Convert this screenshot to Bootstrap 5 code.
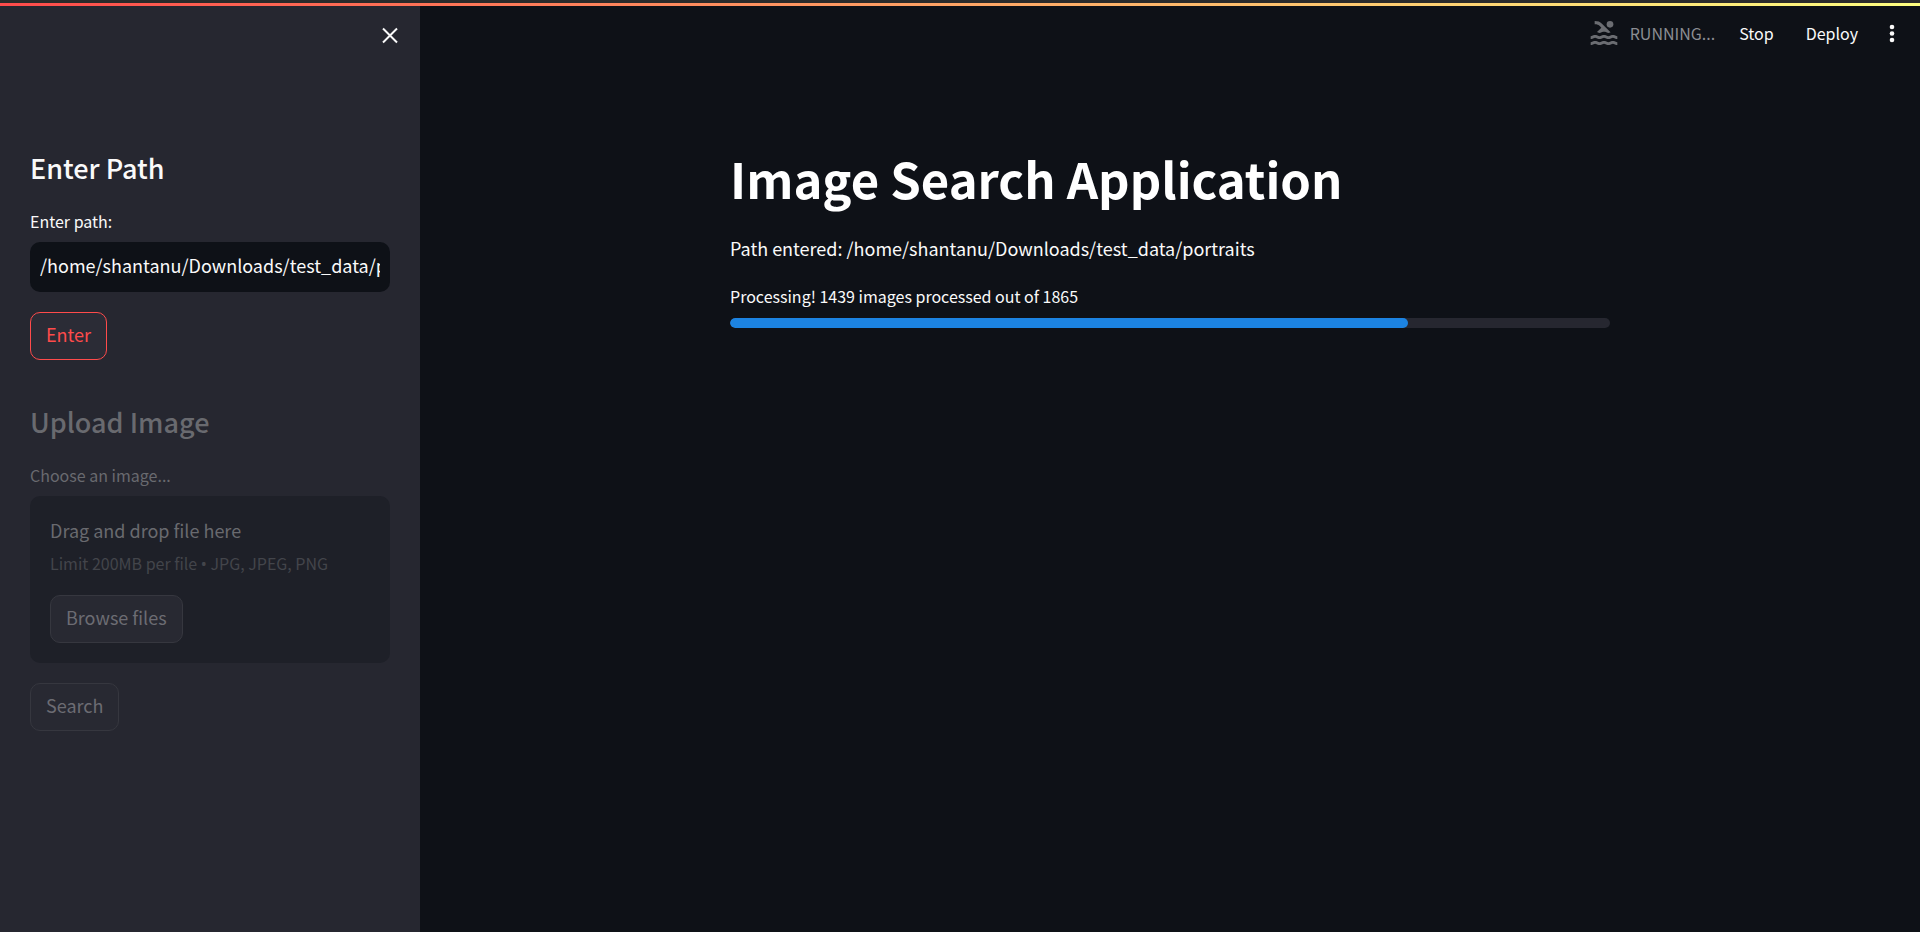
<!DOCTYPE html>
<html lang="en" data-bs-theme="dark">
<head>
<meta charset="utf-8">
<meta name="viewport" content="width=device-width, initial-scale=1">
<title>Image Search Application</title>
<link rel="stylesheet" href="https://cdn.jsdelivr.net/npm/bootstrap@5.3.0/dist/css/bootstrap.min.css">
<style>
  :root { --page: #0e1117; --panel: #262730; --ink: #fafafa; --accent: #ff4b4b; --faded: #696a6f; }
  body { font-family: "Noto Sans CJK SC", "Noto Sans", sans-serif; font-size: 18px; line-height: 32px; color: var(--ink); background: var(--page); }
  .top-strip { height: 6px; border-top: 3px solid #2b2b2b; background: linear-gradient(90deg, #ff4b4b, #ffff80) padding-box; }
  .sidebar { width: 420px; padding: 0 30px 30px; background: var(--panel); }
  .sidebar-top { height: 144px; padding-top: 17px; margin-right: -14px; }
  .section-title { font-size: 27px; line-height: 36px; font-weight: 500; margin-bottom: 21px; color: inherit; }
  .field-label { font-size: 16px; line-height: 28px; margin-bottom: 7px; }
  .path-box { height: 50px; padding: 0 10px 4px; border: 0; border-radius: 10px; font-size: 18px; color: var(--ink); background: var(--page); }
  .tool-btn { height: 48px; padding: 5px 15px 9px; font-size: 18px; line-height: 32px; border: 1px solid #36373f; border-radius: 10px; }
  .tool-btn:disabled { color: #6c6c73; background: #282932; border-color: #36373f; opacity: 1; }
  .tool-btn.active-btn { color: var(--accent); border-color: var(--accent); background: #2b2c36; }
  .below-field { margin-top: 20px; }
  .dimmed { color: var(--faded); margin-top: 44px; }
  .drop-zone { padding: 18px 20px 20px; border-radius: 10px; background: #1e2028; }
  .hint { font-size: 16px; line-height: 28px; margin: 3px 0 17px; color: #43454b; }
  .bullet { font-family: "Noto Sans", sans-serif; }
  .icon-btn { padding: 0; border: 0; color: var(--ink); line-height: 0; }
  .toolbar { height: 53px; padding-right: 12px; font-size: 16px; line-height: 28px; }
  .status { color: #8b8d92; gap: 10px; }
  .bar-btn { padding: 0; border: 0; font-size: 16px; line-height: 28px; color: var(--ink); }
  .toolbar-menu { margin-left: 18px; }
  .deploy { margin-left: 32px; }
  .content { max-width: 920px; padding: 86px 20px 20px; }
  .main-title { font-size: 49px; line-height: 66px; font-weight: 700; margin-bottom: 21px; }
  .path-note { margin-bottom: 18px; }
  .progress-note { font-size: 16px; line-height: 28px; margin-bottom: 8px; }
  .progress { height: 10px; border-radius: 5px; background: var(--panel); }
  .progress-bar { border-radius: 5px; background: #1c83e1; }
</style>
</head>
<body class="min-vh-100 d-flex flex-column">
<div class="top-strip"></div>
<div class="d-flex flex-grow-1">
  <aside class="sidebar flex-shrink-0">
    <div class="sidebar-top d-flex justify-content-end align-items-start">
      <button type="button" class="btn icon-btn" aria-label="Close sidebar">
        <svg width="28" height="28" viewBox="0 0 28 28" fill="none" stroke="currentColor" stroke-width="2"><path d="M7 5.500l14 14M21 5.500L7 19.500"/></svg>
      </button>
    </div>
    <section>
      <h2 class="section-title">Enter Path</h2>
      <label class="field-label d-block" for="path">Enter path:</label>
      <input class="form-control path-box" id="path" type="text" value="/home/shantanu/Downloads/test_data/portraits">
      <button type="button" class="btn tool-btn active-btn d-block below-field">Enter</button>
    </section>
    <section class="dimmed">
      <h2 class="section-title">Upload Image</h2>
      <label class="field-label d-block" for="browse">Choose an image...</label>
      <div class="drop-zone">
        <div>Drag and drop file here</div>
        <div class="hint">Limit 200MB per file <span class="bullet">•</span> JPG, JPEG, PNG</div>
        <button type="button" class="btn tool-btn d-block" id="browse" disabled>Browse files</button>
      </div>
      <button type="button" class="btn tool-btn d-block below-field" disabled>Search</button>
    </section>
  </aside>
  <div class="flex-grow-1">
    <header class="toolbar d-flex justify-content-end align-items-center">
      <div class="status d-flex align-items-center">
        <svg width="32" height="32" viewBox="0 0 24 24" fill="#6b6d72" aria-hidden="true">
          <path d="M10 8l-3.25 3.25c.31.12.56.27.77.39.37.23.59.36 1.15.36s.78-.13 1.15-.36c.46-.27 1.08-.64 2.19-.64s1.73.37 2.19.64c.37.22.6.36 1.15.36.55 0 .78-.13 1.15-.36.12-.07.26-.15.41-.23L10.48 5C8.93 3.45 7.5 2.99 5 3v2.5c1.82-.01 2.89.39 4 1.5l1 1z"/>
          <circle cx="16.5" cy="5.500" r="2.5"/>
          <path id="wave" d="M22 21c-1.11 0-1.73-.37-2.18-.64-.37-.22-.6-.36-1.15-.36-.56 0-.78.13-1.15.36-.46.27-1.07.64-2.18.64s-1.73-.37-2.18-.64c-.37-.22-.6-.36-1.15-.36-.56 0-.78.13-1.15.36-.46.27-1.08.64-2.19.64-1.11 0-1.73-.37-2.18-.64-.37-.23-.6-.36-1.15-.36s-.78.13-1.15.36c-.46.27-1.08.64-2.19.64v-2c.56 0 .78-.13 1.15-.36.46-.27 1.08-.64 2.19-.64s1.73.37 2.18.64c.37.23.59.36 1.15.36.56 0 .78-.13 1.15-.36.46-.27 1.08-.64 2.19-.64 1.11 0 1.73.37 2.18.64.37.22.6.36 1.15.36s.78-.13 1.15-.36c.45-.27 1.07-.64 2.18-.64s1.73.37 2.18.64c.37.23.59.36 1.15.36v2z"/>
          <use href="#wave" y="-4.5"/>
        </svg>
        <span>RUNNING...</span>
      </div>
      <button type="button" class="btn bar-btn ms-4">Stop</button>
      <button type="button" class="btn bar-btn deploy">Deploy</button>
      <button type="button" class="btn icon-btn toolbar-menu" aria-label="Main menu">
        <svg width="32" height="32" viewBox="0 0 32 32" fill="currentColor"><circle cx="16" cy="10" r="2.300"/><circle cx="16" cy="16.500" r="2.300"/><circle cx="16" cy="23" r="2.300"/></svg>
      </button>
    </header>
    <main class="content mx-auto">
      <h1 class="main-title">Image Search Application</h1>
      <p class="path-note">Path entered: /home/shantanu/Downloads/test_data/portraits</p>
      <p class="progress-note" id="note">Processing! 1439 images processed out of 1865</p>
      <div class="progress" role="progressbar" aria-labelledby="note" aria-valuemin="0" aria-valuemax="1865" aria-valuenow="1439">
        <div class="progress-bar" style="width: 77%"></div>
      </div>
    </main>
  </div>
</div>
<script src="https://cdn.jsdelivr.net/npm/bootstrap@5.3.0/dist/js/bootstrap.bundle.min.js"></script>
</body>
</html>
